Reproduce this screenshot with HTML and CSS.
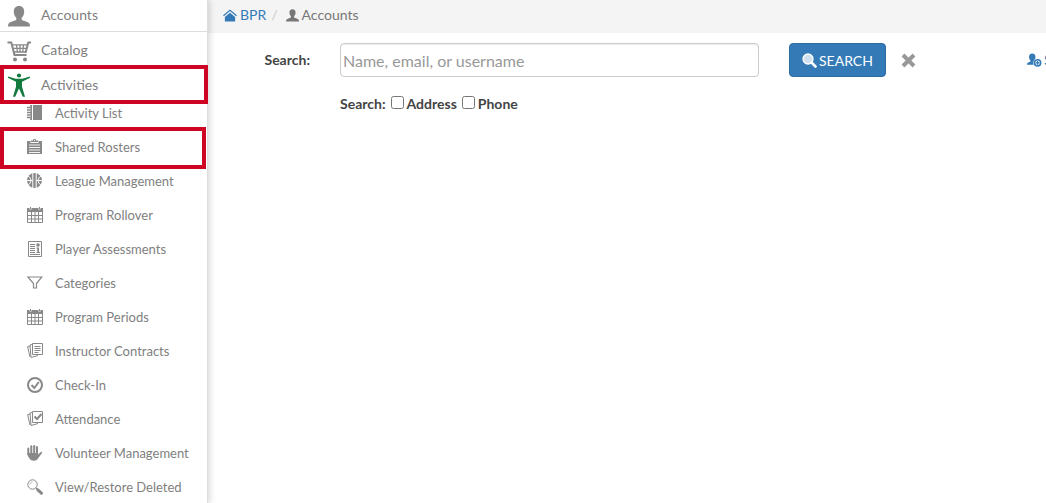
FILE: index.html
```
<!DOCTYPE html>
<html lang="en">

<head>
    <meta charset="UTF-8">
    <meta name="viewport" content="width=device-width, initial-scale=1.0">
    <title>Accounts</title>
    <link rel="stylesheet" href="styles.css">
</head>

<body>
    <!-- Shared icons -->
    <svg class="icon-defs" aria-hidden="true">
        <symbol id="user" viewBox="0 0 22 21">
            <path d="M11 0c3.600 0 5.300 2.500 5.200 6-.1 2.600-1.200 4.600-2.500 5.800v2c1.500 1.200 7.300 2.200 8 4.200.2.800.3 1.700.3 2.500H0c0-1 .1-1.700.4-2.500.8-2 6.500-3 7.900-4.200v-2C7 10.600 5.900 8.600 5.800 6 5.700 2.500 7.400 0 11 0z"/>
        </symbol>
        <symbol id="calendar" viewBox="0 0 16 16">
            <path d="M0 1h2.500v1.500h2V1h7v1.500h2V1H16v4H0zM3 0h1v2H3zM12 0h1v2h-1z"/>
            <path d="M.5 4.500v11h15v-11M.5 8.500h15M.5 12h15M4.500 5v10M8 5v10M11.500 5v10" fill="none" stroke="currentColor"/>
        </symbol>
    </svg>

    <div class="page">
        <nav class="sidebar">
            <ul class="nav">
                <li>
                    <a href="#" class="nav-link first">
                        <svg class="nav-icon" viewBox="0 0 24 24"><use href="#user" x="1" y="3" width="22" height="21"/></svg>
                        Accounts
                    </a>
                </li>
                <li>
                    <a href="#" class="nav-link">
                        <svg class="nav-icon" viewBox="0 0 24 24">
                            <path d="M.5 4.500h3.800L7.500 17h12" fill="none" stroke="currentColor" stroke-width="2"/>
                            <path d="M5 6.800h15M6 10.300h13M7 14h11.500M9.500 7l1 7M13 7v7M16.500 7l-.8 7" fill="none" stroke="currentColor" stroke-width="1.300"/>
                            <path d="M24 4.500h-2.700L18.500 15" fill="none" stroke="currentColor" stroke-width="2"/>
                            <circle cx="8" cy="21.500" r="2"/><circle cx="18" cy="21.500" r="2"/>
                        </svg>
                        Catalog
                    </a>
                </li>
                <li>
                    <a href="#" class="nav-link marked">
                        <svg class="nav-icon green" viewBox="0 0 24 24">
                            <circle cx="12" cy="2.500" r="2.100"/>
                            <path d="M1.300 3.500l7.200 2.300h7l7.200-2.300.4 1.300L15 8.800v5l3 10h-2.200L12 15.500l-3.800 8.300H6l3-10v-5L.9 4.800z"/>
                        </svg>
                        Activities
                    </a>
                    <ul class="subnav">
                        <li>
                            <a href="#" class="sub-link">
                                <svg class="sub-icon" viewBox="0 0 16 16"><path d="M3 0h12v15H3z"/><path d="M5.500 0v15" stroke="#fff"/><path d="M0 2.500h4M0 5h4M0 7.500h4M0 10h4M0 12.500h4" stroke="#fff" stroke-width="2"/><path d="M0 2.500h4M0 5h4M0 7.500h4M0 10h4M0 12.500h4" stroke="currentColor" stroke-width="1.300"/></svg>
                                Activity List
                            </a>
                        </li>
                        <li>
                            <a href="#" class="sub-link marked shared">
                                <svg class="sub-icon" viewBox="0 0 16 16"><path d="M0 2h3.500v2h8V2H15v13H0z"/><path d="M4 3V1.500h2C6 .2 6.500-.2 7.500-.2S9 .2 9 1.500h2V3z"/><circle cx="7.500" cy="1.300" r=".6" fill="#fff"/><path d="M2 6h11M2 8.500h11M2 11h11M2 13.500h11" stroke="#fff" stroke-width=".9"/></svg>
                                Shared Rosters
                            </a>
                        </li>
                        <li>
                            <a href="#" class="sub-link">
                                <svg class="sub-icon" viewBox="0 0 16 16"><circle cx="7.500" cy="7.500" r="7.500"/><path d="M5.800 0v15M9.200 0v15M0 7.500h5.500M9.500 7.500H15M.8 2.500c4 3 4 7 0 10M14.200 2.500c-4 3-4 7 0 10" fill="none" stroke="#fff"/></svg>
                                League Management
                            </a>
                        </li>
                        <li>
                            <a href="#" class="sub-link"><svg class="sub-icon"><use href="#calendar"/></svg>Program Rollover</a>
                        </li>
                        <li>
                            <a href="#" class="sub-link">
                                <svg class="sub-icon" viewBox="0 0 16 16"><path d="M1.500.5h13v15h-13zM3 3.500h5M3 5.500h5M3 7.500h5M3 9.500h5M3 11.500h5M3 13.500h10" fill="none" stroke="currentColor"/><circle cx="11" cy="4" r="1.800"/><path d="M9.500 6.500H12V11h1v1H9.500v-1h.8V7.500h-.8z"/></svg>
                                Player Assessments
                            </a>
                        </li>
                        <li>
                            <a href="#" class="sub-link">
                                <svg class="sub-icon" viewBox="0 0 16 16"><path d="M.8 2h14L9.500 8.500v4.500H6.500V8.500z" fill="none" stroke="currentColor" stroke-width="1.200"/></svg>
                                Categories
                            </a>
                        </li>
                        <li>
                            <a href="#" class="sub-link"><svg class="sub-icon"><use href="#calendar"/></svg>Program Periods</a>
                        </li>
                        <li>
                            <a href="#" class="sub-link">
                                <svg class="sub-icon" viewBox="0 0 16 16"><path d="M5.500.5h10v11h-10zM7.500 3.500h6M7.500 5.500h6M7.500 7.500h6M7.500 9.500h4M5 1.500L3 2l1 12.500 7-2M3 3L.6 3.700 3 14" fill="none" stroke="currentColor"/></svg>
                                Instructor Contracts
                            </a>
                        </li>
                        <li>
                            <a href="#" class="sub-link">
                                <svg class="sub-icon" viewBox="0 0 16 16"><g fill="none" stroke="currentColor"><circle cx="8" cy="8" r="7" stroke-width="2"/><path d="M4.500 8l2.800 3 4.500-6" stroke-width="2"/></g></svg>
                                Check-In
                            </a>
                        </li>
                        <li>
                            <a href="#" class="sub-link">
                                <svg class="sub-icon" viewBox="0 0 16 16"><g fill="none" stroke="currentColor"><path d="M5.500.5h10v11h-10zM5 1.500L3 2l1 12.500 7-2M3 3L.6 3.700 3 14"/><path d="M7.500 5.500L10 8l4.500-5" stroke-width="2"/></g></svg>
                                Attendance
                            </a>
                        </li>
                        <li>
                            <a href="#" class="sub-link">
                                <svg class="sub-icon" viewBox="0 0 16 16"><path d="M1.300 9V3.500M4.300 9V1.200M7.200 9V1M10 9V2" fill="none" stroke="currentColor" stroke-width="2" stroke-linecap="round"/><path d="M.3 8H11v1.500l2.500-2.300c1-.9 2 0 1.500.8L11 13.500c-1.500 3-7 3-8.500 0C1.200 12 .3 10 .3 8z"/></svg>
                                Volunteer Management
                            </a>
                        </li>
                        <li>
                            <a href="#" class="sub-link">
                                <svg class="sub-icon" viewBox="0 0 16 16"><circle cx="5.500" cy="5.500" r="4.700" fill="none" stroke="currentColor"/><path d="M3 5.500C3 4 4 3 5.500 3" fill="none" stroke="currentColor" stroke-width=".7"/><path d="M9 9l1.500 1.500" stroke="currentColor" stroke-width="1.500"/><path d="M10.800 10.800l3.600 3.400" stroke="currentColor" stroke-width="3" stroke-linecap="round"/></svg>
                                View/Restore Deleted
                            </a>
                        </li>
                    </ul>
                </li>
            </ul>
        </nav>

        <main class="main">
            <div class="breadcrumb">
                <a href="#" class="crumb">
                    <svg class="home-icon" viewBox="0 0 15 13"><path d="M7.500 3.500L13 8v5H2V8z"/><path d="M.5 6.800l7-5.800 7 5.800" fill="none" stroke="currentColor" stroke-width="1.300"/></svg>
                    BPR
                </a>
                <span class="slash">/</span>
                <span class="crumb">
                    <svg class="crumb-icon"><use href="#user"/></svg>
                    Accounts
                </span>
            </div>

            <form class="search-form">
                <label class="search-label" for="search">Search:</label>
                <input type="text" id="search" class="search-input" placeholder="Name, email, or username">
                <div class="actions">
                    <button type="submit" class="btn-search">
                        <svg class="btn-icon" viewBox="0 0 15 15"><circle cx="6" cy="6" r="5" fill="#cfe0ef" stroke="#fff" stroke-width="1.300"/><path d="M9.500 9.500l4 4" stroke="#fff" stroke-width="2.600" stroke-linecap="round"/></svg>
                        SEARCH
                    </button>
                    <button type="reset" class="btn-clear" aria-label="Clear">
                        <svg viewBox="0 0 15 15"><path d="M2 2l11 11M13 2L2 13" stroke="currentColor" stroke-width="4"/></svg>
                    </button>
                    <a href="#" class="add-link">
                        <svg viewBox="0 0 16 15"><path d="M5.500 0C8 0 9 1.500 9 3.800c0 1.500-.7 2.800-1.600 3.600-.9 1.300-1 3.500 0 4.600H0c0-2 1-2.500 3.700-3.500V7.400C2.800 6.600 2.200 5.300 2.200 3.800 2.200 1.500 3.300 0 5.500 0z"/><circle cx="11.300" cy="10" r="3.300" fill="#fff" stroke="currentColor" stroke-width="1.700"/><path d="M9.300 10h4M11.300 8v4" stroke="currentColor" stroke-width="1.500"/></svg>
                        S
                    </a>
                </div>
                <div class="options">
                    <span>Search:</span>
                    <label><input type="checkbox">Address</label>
                    <label><input type="checkbox">Phone</label>
                </div>
            </form>
        </main>
    </div>
</body>

</html>
```

FILE: styles.css
```
* {
    box-sizing: border-box;
}

body {
    margin: 0;
    font-family: Lato, sans-serif;
    font-size: 14px;
    line-height: 20px;
    color: #777;
    background: #fff;
    overflow: hidden;
}

a {
    color: #337ab7;
    text-decoration: none;
}

svg {
    fill: currentColor;
    flex: none;
}

.icon-defs {
    display: none;
}

.page {
    display: flex;
    min-height: 100vh;
}

/* Sidebar */
.sidebar {
    flex: 0 0 208px;
    position: relative;
    background: #fff;
    border-right: 1px solid #ddd;
    box-shadow: 2px 0 6px rgba(0, 0, 0, 0.15);
}

.nav,
.subnav {
    list-style: none;
    margin: 0;
    padding: 0;
}

.nav-link,
.sub-link {
    display: flex;
    align-items: center;
    position: relative;
    color: #808080;
}

.nav-link {
    height: 35px;
    padding-left: 7px;
    gap: 10px;
}

.nav-link.first {
    height: 32px;
    padding-bottom: 1px;
    border-bottom: 1px solid #ddd;
}

.nav-icon {
    width: 24px;
    height: 24px;
    color: #888;
}

.nav-icon.green {
    color: #127a3e;
}

.subnav {
    margin-top: -6px;
}

.sub-link {
    height: 34px;
    padding-left: 27px;
    gap: 12px;
    font-size: 13px;
}

.sub-icon {
    width: 16px;
    height: 16px;
    color: #888;
}

/* Red frame around the highlighted entries */
.marked::after {
    content: "";
    position: absolute;
    inset: -2px -1px -2px 0;
    border: 4px solid #ce0424;
}

.shared::after {
    inset: -3px 1px -5px 0;
}

/* Content */
.main {
    flex: 1;
    min-width: 0;
}

.breadcrumb {
    display: flex;
    align-items: center;
    height: 33px;
    padding: 0 15px 3px;
    background: #f4f4f4;
}

.crumb {
    display: flex;
    align-items: center;
    gap: 3px;
}

.slash {
    padding: 0 8px 0 5px;
    color: #ccc;
}

.home-icon {
    width: 14px;
    height: 13px;
}

.crumb-icon {
    width: 13px;
    height: 13px;
}

.search-form {
    display: grid;
    grid-template-columns: 102px minmax(0, 1fr) 257px;
    column-gap: 30px;
    row-gap: 17px;
    padding-top: 10px;
    align-items: center;
}

.search-label {
    text-align: right;
}

.search-label,
.options {
    font-weight: bold;
    color: #444;
}

.search-input {
    width: 100%;
    height: 34px;
    padding: 0 2px;
    border: 1px solid #ccc;
    border-radius: 4px;
    box-shadow: inset 0 1px 1px rgba(0, 0, 0, 0.075);
    font: 16px Lato, sans-serif;
    color: #555;
}

.search-input::placeholder {
    color: #999;
}

.actions {
    display: flex;
    align-items: center;
    white-space: nowrap;
}

.btn-search {
    display: flex;
    align-items: center;
    justify-content: center;
    gap: 2px;
    height: 34px;
    padding: 0 12px;
    border: 1px solid #2e6da4;
    border-radius: 4px;
    background: #337ab7;
    color: #fff;
    font: 14px Lato, sans-serif;
}

.btn-icon {
    width: 15px;
    height: 15px;
}

.btn-clear {
    display: flex;
    margin: 0 auto 0 15px;
    padding: 0;
    border: 0;
    background: none;
    color: #999;
}

.btn-clear svg {
    width: 15px;
    height: 15px;
}

/* The link text runs on past the edge of the window */
.add-link {
    display: flex;
    align-items: center;
    gap: 2px;
    width: 19px;
}

.add-link svg {
    width: 15px;
    height: 15px;
}

.options {
    grid-column: 2;
    display: flex;
    gap: 5px;
}

.options label {
    display: flex;
    align-items: center;
    gap: 3px;
}

.options input {
    width: 13px;
    height: 13px;
    margin: 0 0 3px;
}
```
